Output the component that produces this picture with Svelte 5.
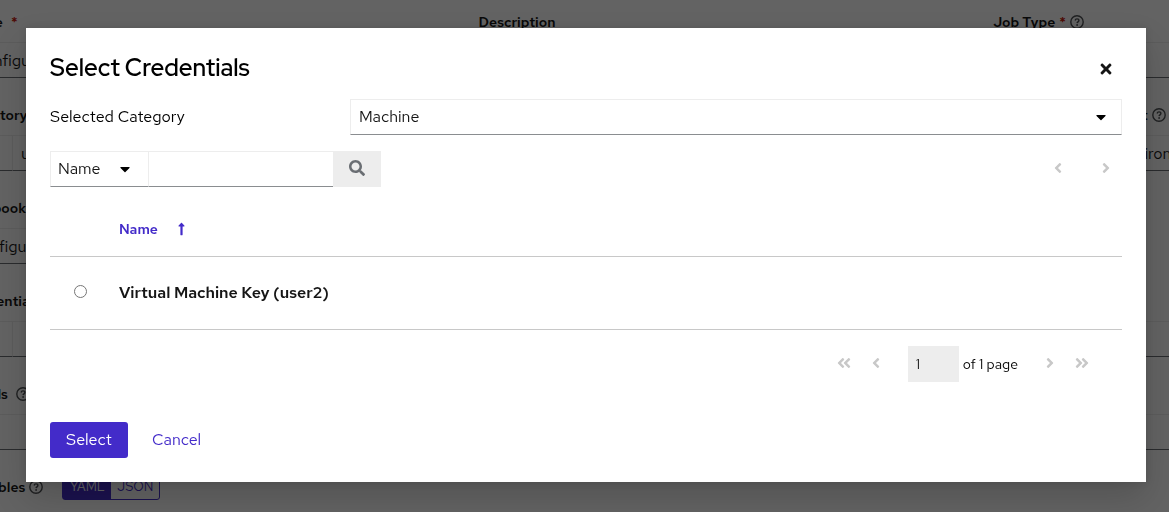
<script>
  let category = $state('Machine');
  let filterKey = $state('Name');
  let query = $state('');
  let page = $state('1');
  let chosen = $state(null);

  const credentials = ['Virtual Machine Key (user2)'];

  const left =
    'M31.7 239l136-136c9.4-9.4 24.6-9.4 33.9 0l22.6 22.6c9.4 9.4 9.4 24.6 0 33.9L127.9 256l96.4 96.4c9.4 9.4 9.4 24.6 0 33.9L201.7 409c-9.4 9.4-24.6 9.4-33.9 0l-136-136c-9.5-9.4-9.5-24.6-.1-34z';
</script>

{#snippet angle(flip, double)}
  <svg class="angle" class:flip viewBox={double ? '0 0 448 512' : '0 0 256 512'} width={double ? 14 : 8} height="16" aria-hidden="true">
    <path d={left} />
    {#if double}<path d={left} transform="translate(192 0)" />{/if}
  </svg>
{/snippet}

{#snippet caret()}
  <svg class="caret" viewBox="0 0 320 512" width="10" height="16" aria-hidden="true">
    <path d="M31.3 192h257.3c17.8 0 26.7 21.5 14.1 34.1L174.1 354.8c-7.8 7.8-20.5 7.8-28.3 0L17.2 226.1C4.6 213.5 13.5 192 31.3 192z" />
  </svg>
{/snippet}

{#snippet help()}
  <svg class="help" viewBox="0 0 14 14" width="14" height="14" aria-hidden="true">
    <circle cx="7" cy="7" r="6.2" />
    <path d="M5.1 5.5C5.3 4.4 6 3.9 7 3.9c1.1 0 1.9.6 1.9 1.6 0 1.3-1.7 1.3-1.8 2.6" />
    <circle class="dot" cx="7.1" cy="10" r="0.9" />
  </svg>
{/snippet}

<main class="page" inert>
  <div class="form">
    <div class="field spaced">
      <label for="f-name">Name <span class="req">*</span></label>
      <input id="f-name" value="Configure" />
    </div>
    <div class="field">
      <label for="f-desc">Description</label>
      <input id="f-desc" />
    </div>
    <div class="field">
      <label for="f-type">Job Type <span class="req">*</span> {@render help()}</label>
      <input id="f-type" />
    </div>
    <div class="field">
      <label for="f-inv">Inventory</label>
      <div class="lookup"><span class="addon"></span><input id="f-inv" value="user2" /></div>
    </div>
    <div class="field">
      <label for="f-proj">Project</label>
      <input id="f-proj" />
    </div>
    <div class="field">
      <label for="f-env">Execution Environment {@render help()}</label>
      <div class="lookup"><span class="addon"></span><input id="f-env" value="Standard environment" /></div>
    </div>
    <div class="field first">
      <label for="f-play">Playbook</label>
      <input id="f-play" value="configure" />
    </div>
    <div class="field wide">
      <label for="f-cred">Credentials</label>
      <div class="lookup"><span class="addon"></span><input id="f-cred" /></div>
    </div>
    <div class="field wide spaced">
      <label for="f-labels">Labels {@render help()}</label>
      <input id="f-labels" />
    </div>
    <div class="variables wide">
      <span class="name">Variables {@render help()}</span>
      <div class="toggle"><button class="on">YAML</button><button>JSON</button></div>
    </div>
  </div>
</main>

<div class="backdrop">
  <div class="modal" role="dialog" aria-modal="true" aria-labelledby="title">
    <header>
      <h1 id="title">Select Credentials</h1>
      <button class="plain close" aria-label="Close">
        <svg viewBox="0 0 352 512" width="12" height="16" aria-hidden="true">
          <path d="M242.72 256l100.07-100.07c12.28-12.28 12.28-32.19 0-44.48l-22.24-22.24c-12.28-12.28-32.19-12.28-44.48 0L176 189.28 75.93 89.21c-12.28-12.28-32.19-12.28-44.48 0L9.21 111.45c-12.28 12.28-12.28 32.19 0 44.48L109.28 256 9.21 356.07c-12.28 12.28-12.28 32.19 0 44.48l22.24 22.24c12.28 12.28 32.2 12.28 44.48 0L176 322.72l100.07 100.07c12.28 12.28 32.2 12.28 44.48 0l22.24-22.24c12.28-12.28 12.28-32.19 0-44.48L242.72 256z" />
        </svg>
      </button>
    </header>

    <div class="category">
      <label for="category">Selected Category</label>
      <div class="select">
        <select id="category" bind:value={category}><option>Machine</option></select>
        {@render caret()}
      </div>
    </div>

    <div class="toolbar">
      <div class="search">
        <div class="select key">
          <select aria-label="Search by" bind:value={filterKey}><option>Name</option></select>
          {@render caret()}
        </div>
        <input type="text" aria-label="Search text" bind:value={query} />
        <button class="go" aria-label="Search">
          <svg viewBox="0 0 512 512" width="16" height="16" aria-hidden="true">
            <path d="M505 442.7L405.3 343c-4.5-4.5-10.6-7-17-7H372c27.6-35.3 44-79.7 44-128C416 93.1 322.9 0 208 0S0 93.1 0 208s93.1 208 208 208c48.3 0 92.7-16.4 128-44v16.3c0 6.4 2.5 12.5 7 17l99.7 99.7c9.4 9.4 24.6 9.4 33.9 0l28.3-28.3c9.4-9.4 9.4-24.6.1-34zM208 336c-70.7 0-128-57.2-128-128 0-70.7 57.2-128 128-128 70.7 0 128 57.2 128 128 0 70.7-57.2 128-128 128z" />
          </svg>
        </button>
      </div>
      <nav class="pager" aria-label="Pages">
        <button class="plain" disabled aria-label="Previous">{@render angle(false, false)}</button>
        <button class="plain" disabled aria-label="Next">{@render angle(true, false)}</button>
      </nav>
    </div>

    <table>
      <thead>
        <tr>
          <td class="pick"></td>
          <th scope="col">
            <button class="sort">
              Name
              <svg viewBox="0 0 256 512" width="7" height="14" aria-hidden="true">
                <path d="M88 166.059V468c0 6.627 5.373 12 12 12h56c6.627 0 12-5.373 12-12V166.059h46.059c21.382 0 32.09-25.851 16.971-40.971l-86.059-86.059c-9.373-9.373-24.569-9.373-33.941 0l-86.059 86.059c-15.119 15.119-4.411 40.971 16.971 40.971H88z" />
              </svg>
            </button>
          </th>
        </tr>
      </thead>
      <tbody>
        {#each credentials as name, i}
          <tr>
            <td class="pick"><input type="radio" id="cred-{i}" name="cred" value={name} bind:group={chosen} /></td>
            <td><label for="cred-{i}">{name}</label></td>
          </tr>
        {/each}
      </tbody>
    </table>

    <nav class="pages" aria-label="Pagination">
      <button class="plain" disabled aria-label="First page">{@render angle(false, true)}</button>
      <button class="plain" disabled aria-label="Previous page">{@render angle(false, false)}</button>
      <div class="current">
        <input type="text" aria-label="Current page" disabled bind:value={page} />
        <span>of 1 page</span>
      </div>
      <button class="plain" disabled aria-label="Next page">{@render angle(true, false)}</button>
      <button class="plain" disabled aria-label="Last page">{@render angle(true, true)}</button>
    </nav>

    <footer>
      <button class="primary">Select</button>
      <button class="link">Cancel</button>
    </footer>
  </div>
</div>

<style>
  :global(body) {
    background: #fff;
    color: #151515;
    font: 16px/24px 'Red Hat Text', Inter, sans-serif;
  }
  * {
    box-sizing: border-box;
  }
  button,
  input,
  select {
    font: inherit;
    color: inherit;
    margin: 0;
    border-radius: 0;
  }
  button {
    border: 0;
    padding: 0;
    background: none;
  }
  svg {
    fill: currentColor;
    flex: none;
  }

  /* Form behind the dialog */
  .page {
    height: 100vh;
    overflow: hidden;
  }
  .form {
    display: grid;
    grid-template-columns: repeat(3, 1fr);
    gap: 24px;
    width: 130%;
    margin-left: -36px;
    padding: 9px 0 12px;
    border-bottom: 1px solid #d2d2d2;
  }
  .field label,
  .name {
    display: flex;
    align-items: center;
    gap: 4px;
    height: 25px;
    margin-bottom: 8px;
    font-size: 14px;
    font-weight: 600;
  }
  .field.spaced label {
    gap: 8px;
  }
  .field input {
    width: 100%;
    height: 36px;
    padding: 0 8px;
    border: 1px solid #ededed;
    border-bottom-color: #6a6e73;
    background: #fff;
    color: #151515;
  }
  .req {
    color: #c9190b;
  }
  .help {
    fill: none;
    stroke: #4f5255;
    stroke-width: 1.4;
  }
  .help .dot {
    fill: #4f5255;
    stroke: none;
  }
  .lookup {
    display: flex;
  }
  .addon {
    flex: none;
    width: 48px;
    border: 1px solid #ededed;
    border-right: 0;
    border-bottom-color: #6a6e73;
  }
  .first {
    grid-column: 1 / 2;
  }
  .wide {
    grid-column: 1 / -1;
  }
  .variables {
    display: flex;
    align-items: center;
    gap: 19px;
  }
  .name {
    margin: 0;
  }
  .toggle {
    display: flex;
    border: 1px solid #432bc9;
    border-radius: 3px;
    color: #432bc9;
    font-size: 13px;
    line-height: 24px;
  }
  .toggle button {
    width: 48px;
  }
  .toggle .on {
    background: #432bc9;
    color: #fff;
  }

  /* Dialog */
  .backdrop {
    position: fixed;
    inset: 0;
    padding: 28px 23px 30px 26px;
    background: rgba(3, 3, 3, 0.62);
    overflow: auto;
  }
  .modal {
    padding: 24px;
    background: #fff;
    box-shadow:
      0 16px 32px rgba(3, 3, 3, 0.16),
      0 0 8px rgba(3, 3, 3, 0.1);
  }
  header {
    display: flex;
    align-items: center;
    justify-content: space-between;
    margin-bottom: 16px;
  }
  h1 {
    margin: 0;
    font-family: 'Red Hat Display', Inter, sans-serif;
    font-size: 24px;
    line-height: 31px;
    font-weight: 600;
    color: #000;
  }
  .plain {
    display: flex;
    align-items: center;
    justify-content: center;
    width: 32px;
    height: 32px;
  }
  .plain:disabled {
    color: #c8c8c8;
    padding-bottom: 2px;
  }
  .close {
    height: 31px;
    padding-top: 2px;
  }
  .flip {
    transform: scaleX(-1);
  }
  .category {
    display: grid;
    grid-template-columns: 300px 1fr;
    align-items: center;
    margin-bottom: 16px;
  }
  .category label {
    color: #000;
  }
  .select {
    display: grid;
    align-items: center;
  }
  .select > :global(*) {
    grid-area: 1 / 1;
  }
  .select .caret {
    justify-self: end;
    margin-right: 16px;
    pointer-events: none;
    color: #000;
  }
  select {
    appearance: none;
    width: 100%;
    height: 36px;
    padding: 0 8px;
    border: 1px solid #ededed;
    border-bottom-color: #8a8d90;
    background: #fff;
  }
  .toolbar,
  .search,
  .pager {
    display: flex;
  }
  .toolbar {
    justify-content: space-between;
    align-items: center;
    margin-bottom: 16px;
  }
  .key {
    width: 98px;
  }
  .key select {
    border-right: 0;
    padding-left: 7px;
  }
  .key.select .caret {
    margin-right: 18px;
  }
  .search input {
    width: 185px;
    height: 36px;
    padding: 0 8px;
    border: 1px solid #ededed;
    border-right: 0;
    border-bottom-color: #8a8d90;
  }
  .go {
    display: flex;
    align-items: center;
    justify-content: center;
    width: 48px;
    padding-bottom: 2px;
    background: #ededed;
    color: #6a6e73;
  }
  .pager {
    gap: 16px;
  }
  table {
    width: 100%;
    border-collapse: separate;
    border-spacing: 0;
  }
  th,
  td {
    padding: 0;
    text-align: left;
    border-bottom: 1px solid #c8c8c8;
  }
  thead tr {
    height: 54px;
  }
  tbody tr {
    height: 73px;
  }
  th {
    padding-bottom: 2px;
  }
  .pick {
    width: 69px;
    padding-bottom: 3px;
  }
  .pick input {
    display: block;
    width: 13px;
    height: 13px;
    margin: 0 0 0 24px;
  }
  tbody label {
    font-weight: 600;
  }
  .sort {
    display: flex;
    align-items: center;
    gap: 20px;
    color: #432bc9;
    font-size: 14px;
    font-weight: 600;
  }
  .pages {
    display: flex;
    align-items: center;
    justify-content: flex-end;
    padding: 16px 24px 40px 0;
  }
  .current {
    display: flex;
    align-items: center;
    gap: 4px;
    margin: 0 16px;
    font-size: 14px;
    color: #000;
  }
  .current input {
    width: 51px;
    height: 36px;
    padding: 0 8px;
    border: 0;
    background: #ededed;
    color: #151515;
  }
  footer {
    display: flex;
    gap: 8px;
  }
  footer button {
    height: 36px;
    padding: 0 16px;
    border-radius: 3px;
  }
  .primary {
    background: #432bc9;
    color: #fff;
  }
  .link {
    color: #432bc9;
  }
</style>
